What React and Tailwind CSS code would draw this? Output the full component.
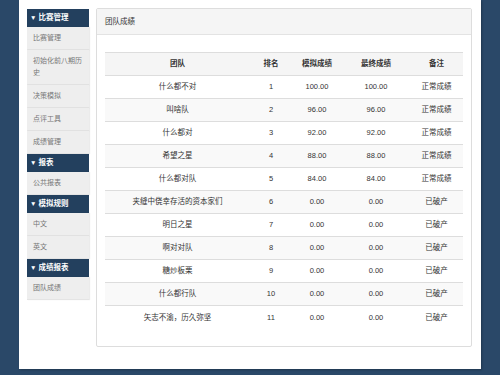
import React from "react";

const MENU = [
  { title: "比赛管理", items: ["比赛管理", "初始化前八期历史", "决策模拟", "点评工具", "成绩管理"] },
  { title: "报表", items: ["公共报表"] },
  { title: "模拟规则", items: ["中文", "英文"] },
  { title: "成绩报表", items: ["团队成绩"] },
];

const ROWS = [
  ["什么都不对", 1, "100.00", "100.00", "正常成绩"],
  ["叫啥队", 2, "96.00", "96.00", "正常成绩"],
  ["什么都对", 3, "92.00", "92.00", "正常成绩"],
  ["希望之星", 4, "88.00", "88.00", "正常成绩"],
  ["什么都对队", 5, "84.00", "84.00", "正常成绩"],
  ["夹缝中侥幸存活的资本家们", 6, "0.00", "0.00", "已破产"],
  ["明日之星", 7, "0.00", "0.00", "已破产"],
  ["啊对对队", 8, "0.00", "0.00", "已破产"],
  ["糖炒板栗", 9, "0.00", "0.00", "已破产"],
  ["什么都行队", 10, "0.00", "0.00", "已破产"],
  ["矢志不渝，历久弥坚", 11, "0.00", "0.00", "已破产"],
];

const Sidebar = () => (
  <aside className="w-[62px] shrink-0 pt-[9px]">
    {MENU.map((group) => (
      <div key={group.title}>
        <div className="h-[18px] bg-[#23405e] pl-[3px] flex items-center text-white font-bold text-[7.5px]">
          <span className="text-[6.5px] mr-[2px]">▼</span>
          {group.title}
        </div>
        {group.items.map((item) => (
          <div
            key={item}
            className="bg-[#eeeeee] border-b border-[#e4e4e4] text-[#777] text-[7px] leading-[12px] pl-[6px] pr-[4px] py-[5px] shadow-[1px_0_1px_rgba(0,0,0,0.08)]"
          >
            {item}
          </div>
        ))}
      </div>
    ))}
  </aside>
);

const App = () => {
  return (
    <div
      className="w-[500px] h-[375px] bg-[#2a4868] overflow-hidden"
      style={{ fontFamily: '"Liberation Sans", "Noto Sans CJK SC", sans-serif' }}
    >
      <div className="ml-[19px] w-[462px] h-[369px] bg-white flex pl-[8px] pr-[9px] shadow-[1px_1px_2px_rgba(0,0,0,0.25)]">
        <Sidebar />
        <main className="flex-1 ml-[7px] mt-[8px] h-[339px] border border-[#dddddd] rounded-[2px] flex flex-col">
          <div className="h-[26px] bg-[#f5f5f5] border-b border-[#e3e3e3] flex items-center pl-[8px] text-[7.5px] text-[#333]">
            团队成绩
          </div>
          <div className="px-[8px] pt-[17px]">
            <table className="w-full border-collapse text-[7.5px] text-[#333] text-center table-fixed">
              <colgroup>
                <col className="w-[145px]" />
                <col className="w-[42px]" />
                <col className="w-[50px]" />
                <col className="w-[68px]" />
                <col />
              </colgroup>
              <thead>
                <tr className="h-[23px] bg-[#f5f5f5] border-t border-b border-[#dddddd] font-bold">
                  <th>团队</th>
                  <th>排名</th>
                  <th>模拟成绩</th>
                  <th>最终成绩</th>
                  <th>备注</th>
                </tr>
              </thead>
              <tbody>
                {ROWS.map((r, i) => (
                  <tr
                    key={r[1]}
                    className={`h-[23px] ${i < ROWS.length - 1 ? "border-b border-[#dddddd]" : ""} ${i % 2 === 1 ? "bg-[#f9f9f9]" : "bg-white"}`}
                  >
                    <td>{r[0]}</td>
                    <td>{r[1]}</td>
                    <td>{r[2]}</td>
                    <td>{r[3]}</td>
                    <td>{r[4]}</td>
                  </tr>
                ))}
              </tbody>
            </table>
          </div>
        </main>
      </div>
    </div>
  );
};

export default App;
